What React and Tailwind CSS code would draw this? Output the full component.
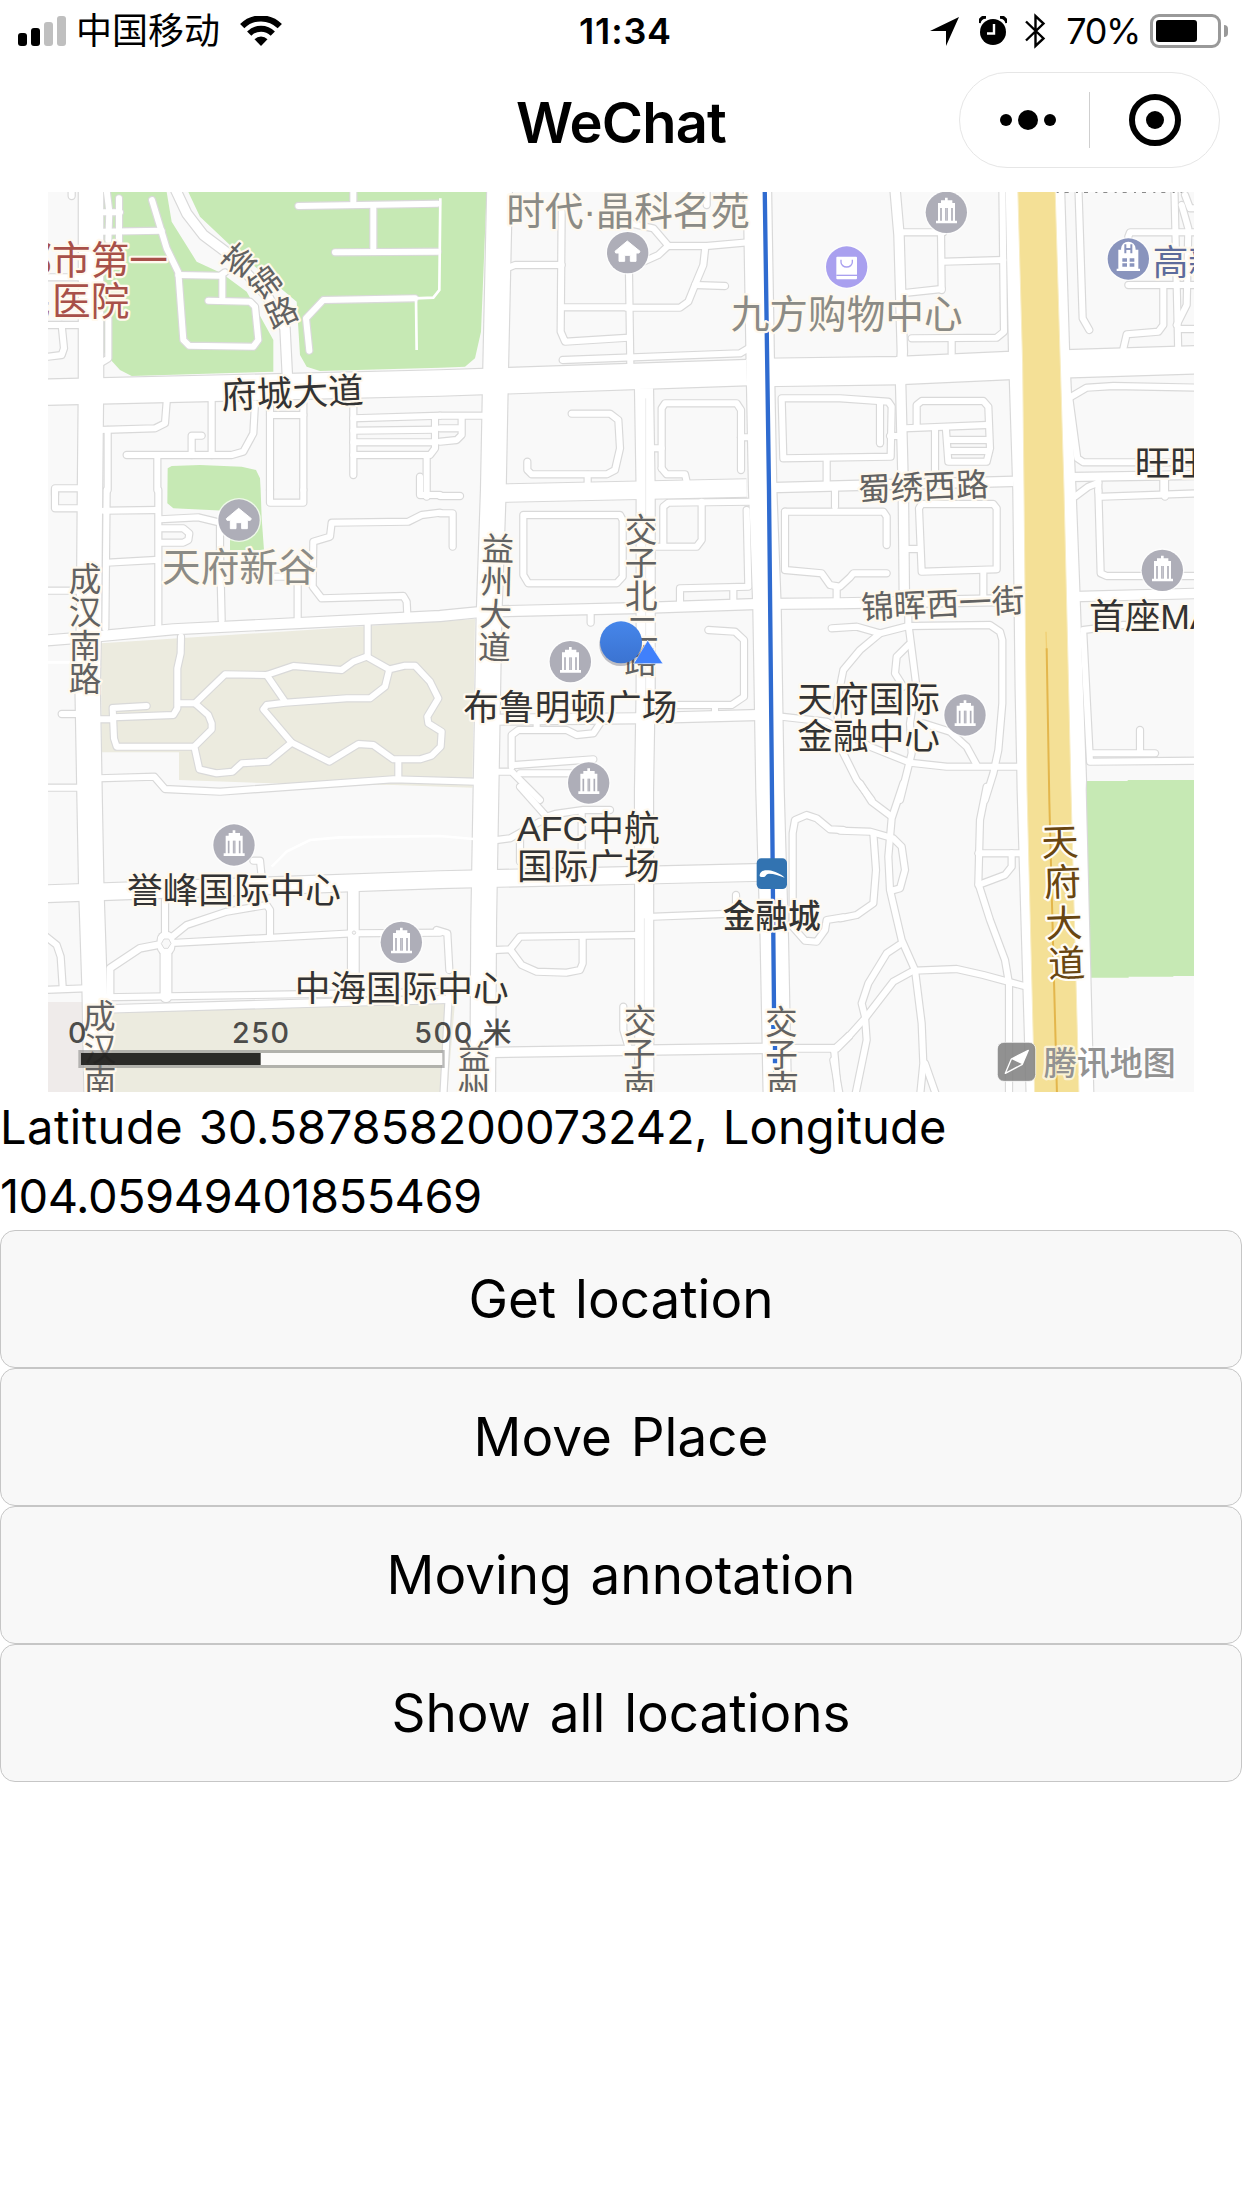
import React from 'react';

/* Map drawing units: three per pixel. Roads are grouped in 1200-unit wide tiles. */
const AREAS = [
  ['#c6e9b4', 'M185,21H380L395,110L470,230L545,265L620,320L700,465V560L275,573L240,555L190,500Z'],
  ['#c6e9b4', 'M445,21L480,95L580,190L770,350L780,510L800,545L840,558L1200,548L1275,545L1305,520L1323,440L1340,21Z'],
  ['#c6e9b4', 'M383,850L395,843L480,840L605,845L648,855L660,880L662,915L665,1000L672,1095H570V978L400,970L382,955Z'],
  ['#c6e9b4', 'M3138,1788H3263V1785H3462V2373H3400V2375H3266V2378H3152Z'],
  ['#ecebdf', 'M183,1375L1305,1302L1297,1808L1060,1800L700,1795L417,1785V1702H185Z'],
  ['#ecebdf', 'M190,2484L1245,2452L1222,2721H200Z'],
  ['#efebea', 'M24,2451H135V2721H24Z'],
];

const MAJOR = [
  [73, 'M153,0V600L150,915L147,1300L143,1515L149,1850L154,2115L164,2415L170,2730'],
  [76, 'M0,622L1200,594L2120,563'],
  [82, 'M2120,563L2570,557L2900,542L3480,524'],
  [74, 'M1379,0L1367,550L1360,915L1347,1295L1338,1815L1331,2215L1328,2730'],
  [54, 'M1812,610L1817,915V1515L1812,1815L1813,2730'],
  [82, 'M2152,0L2162,600L2168,915L2181,1265L2190,1815L2203,2265L2212,2730'],
  [28, 'M2564,0L2577,150L2587,500L2582,600L2590,915L2593,1235'],
  [52, 'M1360,925L2120,909'],
  [28, 'M2160,909L2920,889'],
  [24, 'M3090,876L3480,870'],
  [30, 'M0,1368L160,1355L400,1333L1200,1293L1330,1280L1800,1269L2150,1257L2400,1255L2920,1245'],
  [28, 'M3100,1235L3480,1225'],
  [30, 'M1375,1604L1790,1600L2155,1590'],
  [50, 'M0,2127L1200,2084L1785,2071L2170,2062'],
  [18, 'M190,2437L1250,2420'],
  [22, 'M190,2472L1250,2442'],
  [28, 'M1360,2602L2190,2590'],
  [20, 'M2190,2590H2390L2430,2550'],
];

const TILES = [
  [0, 0, [
    'M95,10V33', 'M198,0L208,80L205,165', 'M237,40V170', 'M185,82H240', 'M185,140L365,137',
    'M336,45L380,190L415,262L430,465L447,482L640,485L655,465L645,365L630,350L505,347',
    'M415,270L540,272L555,262', 'M547,275V345',
    'M775,63L1193,56', 'M940,0V60', 'M1000,63V200', 'M885,202L1193,200',
    'M808,497L798,400L850,345L1125,340', 'M205,400V520L180,535', 'M24,277H120', 'M24,420H115',
    'M24,515L65,510L72,490L65,420', 'M180,735L345,730L375,715L380,650', 'M203,735V915',
    'M515,645V810', 'M645,655L640,745L610,800L575,810H260', 'M455,810V752H485', 'M352,815V915',
    'M690,655V915', 'M790,655V915', 'M690,690H790', 'M940,650V870', 'M940,700L1200,692',
    'M940,737L1185,734', 'M940,772H1185', 'M940,810H1170L1185,790V700', 'M1160,820V935', 'M45,930V910H125',
  ]],
  [1200, 0, [
    'M200,250L225,240H365', 'M365,80L362,440L375,470L565,458', 'M365,367H560', 'M567,265L571,540',
    'M570,115L640,130L685,182L655,210L610,230', 'M685,183H800L925,172',
    'M795,195L790,240L765,300L745,350L720,368H560', 'M765,300L855,303', 'M368,525L900,505L925,490',
    'M800,0V60', 'M395,686H510L535,705L540,790L525,855L500,868H275L262,855V830', 'M443,870V905',
    'M665,850V670L675,655H890L903,675V855', 'M640,790H665', 'M903,757H930', 'M665,850L680,868H735L740,890',
    'M0,692H130', 'M0,730H55', 'M0,770L50,765L65,750V700', 'M1160,820V900',
  ]],
  [2400, 0, [
    'M185,142H310', 'M303,145L305,315', 'M185,325L305,312', 'M310,230L490,225',
    'M487,0L492,440L470,458L215,460', 'M335,460V505',
    'M-175,640H0L145,650L155,665L152,815L-170,820Z', 'M120,655V775', 'M150,753H180',
    'M230,720V660L245,648H430L445,665L450,790L440,830H325L318,735', 'M195,730L440,720', 'M285,735V870',
    'M325,765H445', 'M325,798H445',
    'M715,0L728,400L748,435', 'M865,155L870,142H1080', 'M1003,0L1015,510', 'M865,300H1080',
    'M970,305V420L955,440L860,448L848,500', 'M1025,60L1045,130L1040,360L1010,420', 'M1015,432H1080',
    'M1035,30L1050,70H1080', 'M685,640L740,608L820,603L1080,608', 'M688,640L712,820L730,832H1080',
    'M705,935L745,905L775,893', 'M775,890V920', 'M970,880V925',
  ]],
  [0, 915, [
    'M115,55H45V0', 'M200,0L196,415', 'M190,62L350,60', 'M355,0V405', 'M360,88L475,82L540,98V180',
    'M360,115H430L448,130L445,150L430,158H360', 'M200,218L345,210', 'M540,180L545,390', 'M690,0V38H790V0',
    'M773,285V385', 'M1200,68L1145,75L1105,95L875,98L870,140L820,155L818,290L845,325L1090,318L1100,335L1102,375',
    'M705,260H740', 'M24,302H115', 'M65,672H115',
    'M423,440L422,490L412,535V655L400,675L220,682', 'M175,688H220', 'M320,648L218,654L222,745L230,770H460',
    'M415,640H465L555,553L680,555L760,528L905,540L940,515L980,500L1048,538L1095,527H1125L1170,575L1195,625L1162,680L1165,700L1205,725L1202,770L1175,797L1140,808H1060L1000,765L955,762L868,815L755,758L670,658L680,645L735,638L920,625H990L1035,590L1048,538',
    'M680,555L735,635', 'M465,640L505,675L515,700V718L463,770L478,838L530,850L578,845L605,820L685,815L755,758',
    'M983,395V500', 'M1075,810V865', 'M175,865L343,860L375,897L540,905L1060,868L1310,875', 'M24,893H120',
  ]],
  [1200, 915, [
    'M0,18H60', 'M-60,-40V15H0', 'M0,70H38V170', 'M250,75H540L548,90V260L530,280H265L250,255Z', 'M452,365V398',
    'M670,160V50L685,38L930,35', 'M785,35V150L770,170H640', 'M920,60L925,290L720,295V340', 'M880,300V345',
    'M805,420L885,425L912,450V620L875,645H640', 'M825,655V680', 'M290,700V715',
    'M215,830V735L235,720H380L410,735L460,730L480,700', 'M225,825L460,808', 'M175,845H215L300,930', 'M240,850H400',
  ]],
  [2400, 915, [
    'M-165,65H130L140,80V165', 'M-165,65V240L-55,250L-30,285L0,290L30,262L40,250H140', 'M-10,290V330',
    'M237,55L245,245L470,238V55L460,42H245Z', 'M205,177H235', 'M430,250V325', 'M-15,0V50',
    'M-25,415L50,410L120,430L205,408L450,405L480,425L487,450V640L475,780L460,850L435,930',
    'M205,330V400L228,580L210,700L215,790L180,930',
    'M120,430L60,480L10,540L-10,640L0,770L50,870L95,930', 'M205,465L170,500L165,550L190,590',
    'M250,700L330,725L380,770L410,825', 'M-175,680L-40,695L90,770L210,818L320,830H540',
    'M775,0L782,250L800,258H1080', 'M785,20L1080,10', 'M975,-30V20', 'M730,430L750,815L1080,812',
    'M755,790H945', 'M900,720V785', 'M730,420L850,405H1000',
  ]],
  [0, 1815, [
    'M640,212H660L665,260', 'M375,330V430', 'M378,455L440,405L560,365L680,345L690,360V435',
    'M378,460L940,430L1200,428', [32, 'M378,470V620'], [32, 'M940,300V580'], [20, 'M378,460L300,475L210,535V620'],
    'M0,425L50,465L62,500L68,590', 'M0,600L140,595', [50, 'M378,450V470'],
    'M1190,420L1222,430L1228,540', 'M1226,620L1210,920',
  ]],
  [1200, 1815, [
    'M240,-10L320,80L345,72L430,60H510', 'M170,150L210,145L300,95', 'M425,70V180', 'M240,150V215',
    'M640,380L850,372', 'M888,315V345', 'M165,480L210,478L240,440L590,435',
    'M210,478L245,525L290,545L380,548L420,540L428,520V445',
    'M1210,120L1170,118L1130,85L1100,75L1065,90L1058,130V410L1095,452L1130,455L1155,420L1160,390L1210,382',
    'M550,650V720L565,770', 'M1182,775L1195,920',
  ]],
  [2400, 1815, [
    'M60,-20L95,35L155,80', 'M190,-20L155,85L145,200L150,300L185,450L225,540L245,700L250,820L240,920',
    'M0,122L90,125L160,145L185,170L195,240L180,295L155,302', 'M100,130L108,240L100,340L50,375L0,385',
    'M185,460L140,490L85,580L65,640L75,680L80,750L45,920',
    'M-20,780L30,735L75,685L160,575L220,542L350,537L430,555L560,590',
    'M440,-10L420,90L415,280L450,390L495,510L507,580V920', 'M415,190H540', 'M415,285L495,255L515,230V190',
    'M255,820L290,920', 'M-20,810L0,920',
  ]],
];

function Roads({ casing }) {
  const color = casing ? '#d9d9d9' : '#ffffff';
  const extra = casing ? 7 : 0;
  return (
    <g fill="none" stroke={color} strokeLinecap="round" strokeLinejoin="round">
      {TILES.map(([x, y, list], i) => (
        <g key={i} transform={`translate(${x} ${y})`}>
          {list.map((r, j) => {
            const [w, d] = Array.isArray(r) ? r : [18, r];
            return <path key={j} d={d} strokeWidth={w + extra} />;
          })}
        </g>
      ))}
      <path d="M400,0L440,85L490,150L570,210L680,330L735,430L743,590" strokeWidth={28 + extra} />
      <g strokeLinecap="butt">
        {MAJOR.map(([w, d], i) => <path key={i} d={d} strokeWidth={w + extra} />)}
      </g>
      <path
        d="M2897,0L2907,500L2910,600L2920,915L2927,1515L2932,1755L2933,1815L2960,2730H3160L3137,1815L3138,1785L3118,1215L3107,925L3091,585L3087,490L3072,0Z"
        fill={color}
        strokeWidth={casing ? 7 : 0}
      />
    </g>
  );
}

function Label({ x, y, size = 107, rot = 0, color = '#333333', anchor = 'middle', halo = '#fff9ee', weight = 400, len, children }) {
  return (
    <text
      transform={`translate(${x} ${y}) rotate(${rot})`}
      y={size * 0.365}
      fontSize={size}
      fontWeight={weight}
      textAnchor={anchor}
      textLength={len}
      fill={color}
      stroke={halo}
      strokeWidth="13"
      strokeLinejoin="round"
      paintOrder="stroke"
    >
      {children}
    </text>
  );
}

function Column({ text, points, ...rest }) {
  return points.map(([x, y], i) => <Label key={i} x={x} y={y} {...rest}>{text[i]}</Label>);
}

function Pin({ x, y, color = '#aeaeb8', children }) {
  return (
    <g transform={`translate(${x} ${y})`}>
      <circle r="66" fill="#fff" opacity=".7" />
      <circle r="62" fill={color} />
      {children}
    </g>
  );
}

function Tower({ x, y }) {
  return (
    <Pin x={x} y={y}>
      <path fill="#fff" d="M-4,-44H4V-36H18V-28H26V25H32V33H-31V25H-25V-28H-16V-36H-4Z" />
      <path stroke="#aeaeb8" strokeWidth="5" d="M-16,-13V25M17,-13V25" />
      <path stroke="#aeaeb8" strokeWidth="8" d="M0.5,-13V25" />
      <path stroke="#fff" strokeWidth="1.5" d="M0.5,-13V25" opacity=".6" />
    </Pin>
  );
}

function House({ x, y }) {
  return (
    <Pin x={x} y={y}>
      <path fill="#fff" stroke="#fff" strokeWidth="3" strokeLinejoin="round" d="M-1,-35L37,-4L34,1H25V26H8V8H-9V26H-26V1H-36L-38,-4Z" />
    </Pin>
  );
}

const TOWERS = [[2719, 82], [1591, 1430], [1646, 1794], [3367, 1156], [2775, 1590], [582, 1980], [1084, 2272]];
const GREY = '#626262';
const SOFT = '#8b8b86';

function CityMap() {
  return (
    <svg className="block h-[900px] w-[1146px]" viewBox="24 21 3438 2700" fontFamily='"Liberation Sans", "Noto Sans CJK SC", sans-serif'>
      <defs>
        <linearGradient id="dot" x1="0" y1="0" x2="0" y2="1">
          <stop offset="0" stopColor="#4686ea" />
          <stop offset="1" stopColor="#3b73d1" />
        </linearGradient>
      </defs>
      <rect x="24" y="21" width="3438" height="2700" fill="#f9f9f9" />
      {AREAS.map(([c, d], i) => <path key={i} d={d} fill={c} />)}
      <Roads casing />
      <Roads />
      <g fill="none" stroke="#fff" strokeWidth="8">
        <path d="M1128,340L1130,495M1125,340L1180,338L1198,315L1201,40M24,1432H110" />
        <path d="M695,2045L740,2000L810,1965L900,1957L1200,1953L1300,1962" />
      </g>
      <g fill="#f9f9f9" stroke="#dbdbdb" strokeWidth="3">
        <path d="M372,2262H386L393,2275L384,2290H372L364,2276Z" />
        <circle cx="942" cy="2243" r="5" />
        <path d="M1817,640V1600M1813,2200V2500" stroke="#ececec" />
      </g>
      <path fill="#f4e096" stroke="#f8edc4" strokeWidth="3" d="M2933,0L2948,540L2952,915L2961,1815L2984,2730H3117L3093,1815L3072,915L3061,540L3045,0Z" />
      <path stroke="#f0cf74" strokeWidth="4" d="M3018,1340L3020,1400" />
      <path fill="none" stroke="#e3b64c" strokeWidth="6" d="M3020,1390L3028,1850L3051,2730" />
      <path fill="none" stroke="#2f6bd0" strokeWidth="13" d="M2174,0L2187,915L2196,1830L2202,2470" />
      <path stroke="#2f6bd0" strokeWidth="13" d="M2205,2583V2595M2205,2620V2635M2206,2655V2661M2200,2520V2532" />
      <path stroke="#8a8a8a" strokeWidth="4" strokeDasharray="6 18 12 22" d="M3050,22H3425" />

      {TOWERS.map(([x, y]) => <Tower key={x} x={x} y={y} />)}
      <House x={1763} y={203} />
      <House x={597} y={1005} />
      <Pin x={2420} y={246} color="#a9a0ef">
        <rect x="-31" y="-31" width="62" height="68" rx="3" fill="#fff" />
        <path d="M-31,25H31" stroke="#a9a0ef" strokeWidth="4" />
        <path d="M-17,-22V-14A17 14 0 0 0 17 -14V-22" fill="none" stroke="#a9a0ef" strokeWidth="4" />
      </Pin>
      <Pin x={3265} y={222} color="#8994bd">
        <path fill="#fff" d="M-30,-28H-20A22 22 0 0 1 18 -28H30V29H35V36H-35V29H-30Z" />
        <circle cy="-30" r="22" fill="#fff" />
        <path d="M-9,-44V-17M9,-44V-17M-9,-30H9" stroke="#8994bd" strokeWidth="6" fill="none" />
        <path d="M-18,3H-4M4,3H18M-18,18H-4M4,18H18" stroke="#8994bd" strokeWidth="10" />
      </Pin>

      <Label x={-80} y={225} size={116} anchor="start" color="#a85049">都市第一</Label>
      <Label x={-80} y={349} size={116} anchor="start" color="#a85049">民医院</Label>
      <Label x={597} y={227} size={96} rot={-48} color={GREY}>荟</Label>
      <Label x={675} y={293} size={96} rot={-36} color={GREY}>锦</Label>
      <Label x={725} y={382} size={96} rot={-24} color={GREY}>路</Label>
      <Label x={757} y={623} rot={-2.5}>府城大道</Label>
      <Label x={1764} y={78} size={116} color={SOFT} len={730}>时代·晶科名苑</Label>
      <Label x={2420} y={388} size={116} color={SOFT}>九方购物中心</Label>
      <Label x={2650} y={905} size={98} rot={-2.5} color={GREY}>蜀绣西路</Label>
      <Label x={3284} y={835} anchor="start">旺旺</Label>
      <Label x={3338} y={230} anchor="start" color="#5d6b9b">高新</Label>
      <Column text="成汉南路" size={98} color={GREY} points={[[135, 1183], [135, 1282], [135, 1382], [135, 1481]]} />
      <Label x={598} y={1147} size={116} color={SOFT}>天府新谷</Label>
      <Column text="益州大道" size={98} rot={1.5} color={GREY} points={[[1374, 1091], [1371, 1190], [1367, 1288], [1363, 1387]]} />
      <Column text="交子北二路" size={98} color={GREY} points={[[1803, 1036], [1803, 1134], [1804, 1232], [1807, 1331], [1802, 1428]]} />
      <Label x={1591} y={1566}>布鲁明顿广场</Label>
      <Label x={2708} y={1256} size={98} rot={-2.8} color={GREY}>锦晖西一街</Label>
      <Label x={2486} y={1542}>天府国际</Label>
      <Label x={2486} y={1654}>金融中心</Label>
      <Label x={3147} y={1293} anchor="start">首座MA</Label>
      <Label x={582} y={2115}>誉峰国际中心</Label>
      <Label x={1645} y={1930}>AFC中航</Label>
      <Label x={1645} y={2043}>国际广场</Label>
      <g transform="translate(2195 2066)">
        <rect x="-45" y="-46" width="91" height="92" rx="14" fill="#3273b1" />
        <path fill="#fff" d="M-36,4C-34,-8 -22,-12 -10,-10C10,-8 28,2 39,12C22,6 8,0 -8,0C-20,2 -16,10 -26,10C-34,10 -37,8 -36,4Z" />
      </g>
      <Label x={2195} y={2193} size={98} weight={500}>金融城</Label>
      <Label x={1085} y={2408}>中海国际中心</Label>
      <Column text="天府大道" size={112} rot={-2} color="#694611" halo="#fffdf6" points={[[3060, 1971], [3067, 2091], [3072, 2215], [3080, 2335]]} />
      <Column text="成汉南" size={98} color={GREY} points={[[178, 2493], [180, 2591], [180, 2689]]} />
      <Column text="益州" size={98} color={GREY} points={[[1302, 2616], [1302, 2713]]} />
      <Column text="交子南" size={98} color={GREY} points={[[1800, 2508], [1798, 2607], [1798, 2705]]} />
      <Column text="交子南" size={98} color={GREY} points={[[2224, 2511], [2225, 2611], [2228, 2707]]} />

      <g fontFamily='Inter, "Noto Sans CJK SC", sans-serif' fontSize="86" fontWeight="500" fill="#4c4c4a" textAnchor="middle" letterSpacing="5">
        <text x="114" y="2574">0</text>
        <text x="664" y="2574">250</text>
        <text x="1212" y="2574">500</text>
        <text x="1374" y="2574">米</text>
      </g>
      <rect x="115" y="2595" width="1099" height="54" fill="#8c8c8a" opacity=".6" />
      <rect x="123" y="2604" width="540" height="36" fill="#1c1c19" opacity=".9" />
      <rect x="662" y="2604" width="545" height="36" fill="#fcfbf9" />

      <g transform="translate(2872 2572)">
        <rect width="115" height="117" rx="20" fill="#828282" fillOpacity=".88" stroke="#fff" strokeOpacity=".7" strokeWidth="3" />
        <path fill="none" stroke="#fff" strokeWidth="4" strokeLinejoin="round" d="M93,24L75,66L24,93L42,50Z" />
        <path fill="#fff" d="M93,24L75,66L42,50Z" />
      </g>
      <Label x={3209} y={2633} size={99} weight={500} color="#929292" halo="#ffffff99">腾讯地图</Label>

      <path fill="#4080fb" stroke="#fff" strokeOpacity=".6" strokeWidth="3" d="M1823,1366L1869,1436H1781Z" />
      <circle cx="1742" cy="1379" r="64" fill="#334" opacity=".3" />
      <circle cx="1743" cy="1372" r="63" fill="url(#dot)" />
    </svg>
  );
}

function StatusBar() {
  return (
    <div className="flex h-[62px] items-center pl-[18px] pr-[14px]">
      <div className="flex flex-1 items-center">
        <div className="flex h-[30px] items-end gap-[4px]">
          <i className="h-[13px] w-[9px] rounded-[3px] bg-black" />
          <i className="h-[18px] w-[9px] rounded-[3px] bg-black" />
          <i className="h-[24px] w-[9px] rounded-[3px] bg-[#bfbfbf]" />
          <i className="h-[30px] w-[9px] rounded-[3px] bg-[#bfbfbf]" />
        </div>
        <span className="ml-[10px] text-[36px] leading-[62px]">中国移动</span>
        <svg className="ml-[20px] h-[30px] w-[42px]" viewBox="0 0 42 30">
          <g fill="none" stroke="#000" strokeWidth="6">
            <path d="M2.2,10.2A26.5 26.5 0 0 1 39.8,10.2" />
            <path d="M9.2,17.6A16.7 16.7 0 0 1 32.8,17.6" />
          </g>
          <path d="M21,30L14.5,23.2A9.2 9.2 0 0 1 27.5,23.2Z" />
        </svg>
      </div>
      <span className="pl-[5px] text-[36px] font-semibold leading-[62px] tracking-[0.8px]">11:34</span>
      <div className="flex flex-1 items-center justify-end">
        <svg className="h-[29px] w-[29px]" viewBox="0 0 29 29"><path d="M29,0L16,29V14H0Z" /></svg>
        <svg className="ml-[20px] h-[30px] w-[28px]" viewBox="0 0 28 30">
          <circle cx="14" cy="16" r="13" />
          <path d="M0,7A7 7 0 0 1 7,1M28,7A7 7 0 0 0 21,1" fill="none" stroke="#000" strokeWidth="3.4" />
          <path d="M15,8V17.5H8" fill="none" stroke="#fff" strokeWidth="2.4" />
        </svg>
        <svg className="ml-[18px] h-[36px] w-[21px]" viewBox="0 0 21 36">
          <path d="M1,8.5L18.5,25.5L10.5,33V3L18.5,10.5L1,27.5" fill="none" stroke="#000" strokeWidth="2.4" />
        </svg>
        <span className="ml-[20px] text-[36px] leading-[62px] tracking-[-1.4px]">70%</span>
        <span className="ml-[10px] flex h-[34px] w-[71px] items-center rounded-[9px] border-[3px] border-[#999] pl-[3px]">
          <i className="h-[22px] w-[41px] rounded-[3px] bg-black" />
        </span>
        <i className="ml-[3px] h-[12px] w-[4px] rounded-r-full bg-[#999]" />
      </div>
    </div>
  );
}

function NavBar() {
  return (
    <div className="flex h-[130px] px-[22px]">
      <div className="flex-1" />
      <h1 className="pt-[19px] text-[56px] font-semibold leading-[84px] tracking-[-0.8px]">WeChat</h1>
      <div className="flex flex-1 justify-end pt-[10px]">
        <div className="flex h-[96px] w-[261px] items-center rounded-full border border-[#e6e6e6]">
          <div className="flex w-[129px] items-center justify-center gap-[6px] pl-[7px]">
            <i className="size-[12px] rounded-full bg-black" />
            <i className="size-[20px] rounded-full bg-black" />
            <i className="size-[12px] rounded-full bg-black" />
          </div>
          <i className="h-[56px] w-px bg-[#cfcfcf]" />
          <div className="flex flex-1 justify-center">
            <span className="flex size-[52px] items-center justify-center rounded-full border-[6px] border-black">
              <i className="size-[18px] rounded-full bg-black" />
            </span>
          </div>
        </div>
      </div>
    </div>
  );
}

const ACTIONS = ['Get location', 'Move Place', 'Moving annotation', 'Show all locations'];

export default function App() {
  return (
    <div className="min-h-[2208px] w-[1242px] overflow-hidden bg-white font-[Inter,'Noto_Sans_CJK_SC',sans-serif] text-black">
      <div className="flex h-[192px] flex-col">
        <StatusBar />
        <NavBar />
      </div>
      <div className="px-[48px]">
        <CityMap />
      </div>
      <p className="h-[138px] text-[47px] leading-[69px] [word-spacing:2px]">
        <span className="tracking-[0.5px]">Latitude </span>
        <span className="tracking-[-0.2px]">30.587858200073242, </span>
        <span className="tracking-[0.2px]">Longitude</span>
        <br />
        <span className="tracking-[-0.5px]">104.05949401855469</span>
      </p>
      <div className="flex flex-col">
        {ACTIONS.map((label) => (
          <button key={label} className="h-[138px] rounded-[15px] border border-[#c6c6c6] bg-[#f8f8f8] text-[53px] leading-[136px] [word-spacing:4px]">
            {label}
          </button>
        ))}
      </div>
    </div>
  );
}
